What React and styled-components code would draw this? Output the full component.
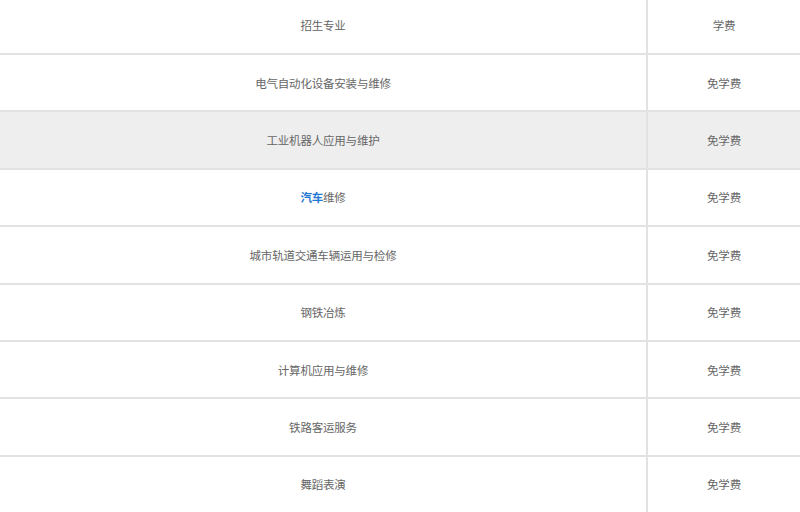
import styled, { createGlobalStyle } from 'styled-components';

const GlobalStyle = createGlobalStyle`
  html, body {
    margin: 0;
    padding: 0;
    background: #ffffff;
    overflow: hidden;
  }
  body {
    font-family: "Microsoft YaHei", "Noto Sans CJK SC", "Noto Sans", sans-serif;
  }
`;

const Table = styled.div`
  width: 800px;
  margin-top: -2.4px;
  display: flex;
  flex-direction: column;
`

const Row = styled.div`
  height: 55.4px;
  display: grid;
  grid-template-columns: 646px 154px;
  border-bottom: 2px solid #e2e2e2;
  background: ${(p) => (p.$shaded ? '#eeeeee' : '#ffffff')};
`

const Cell = styled.div`
  display: flex;
  align-items: center;
  justify-content: center;
  font-size: 11.5px;
  color: #666666;
  letter-spacing: -0.2px;
`

const FeeCell = styled(Cell)`
  border-left: 2px solid #e2e2e2;
`

const Link = styled.span`
  color: #1f78d1;
  font-weight: bold;
`

const majors = [
    { name: '电气自动化设备安装与维修', fee: '免学费' },
    { name: '工业机器人应用与维护', fee: '免学费', shaded: true },
    { name: <><Link>汽车</Link>维修</>, fee: '免学费' },
    { name: '城市轨道交通车辆运用与检修', fee: '免学费' },
    { name: '钢铁冶炼', fee: '免学费' },
    { name: '计算机应用与维修', fee: '免学费' },
    { name: '铁路客运服务', fee: '免学费' },
    { name: '舞蹈表演', fee: '免学费' },
];

function App() {
    return (
        <>
            <GlobalStyle />
            <Table>
                <Row>
                    <Cell>招生专业</Cell>
                    <FeeCell>学费</FeeCell>
                </Row>
                {majors.map((major, i) => (
                    <Row key={i} $shaded={major.shaded}>
                        <Cell>{major.name}</Cell>
                        <FeeCell>{major.fee}</FeeCell>
                    </Row>
                ))}
            </Table>
        </>
    );
}

export default App;
